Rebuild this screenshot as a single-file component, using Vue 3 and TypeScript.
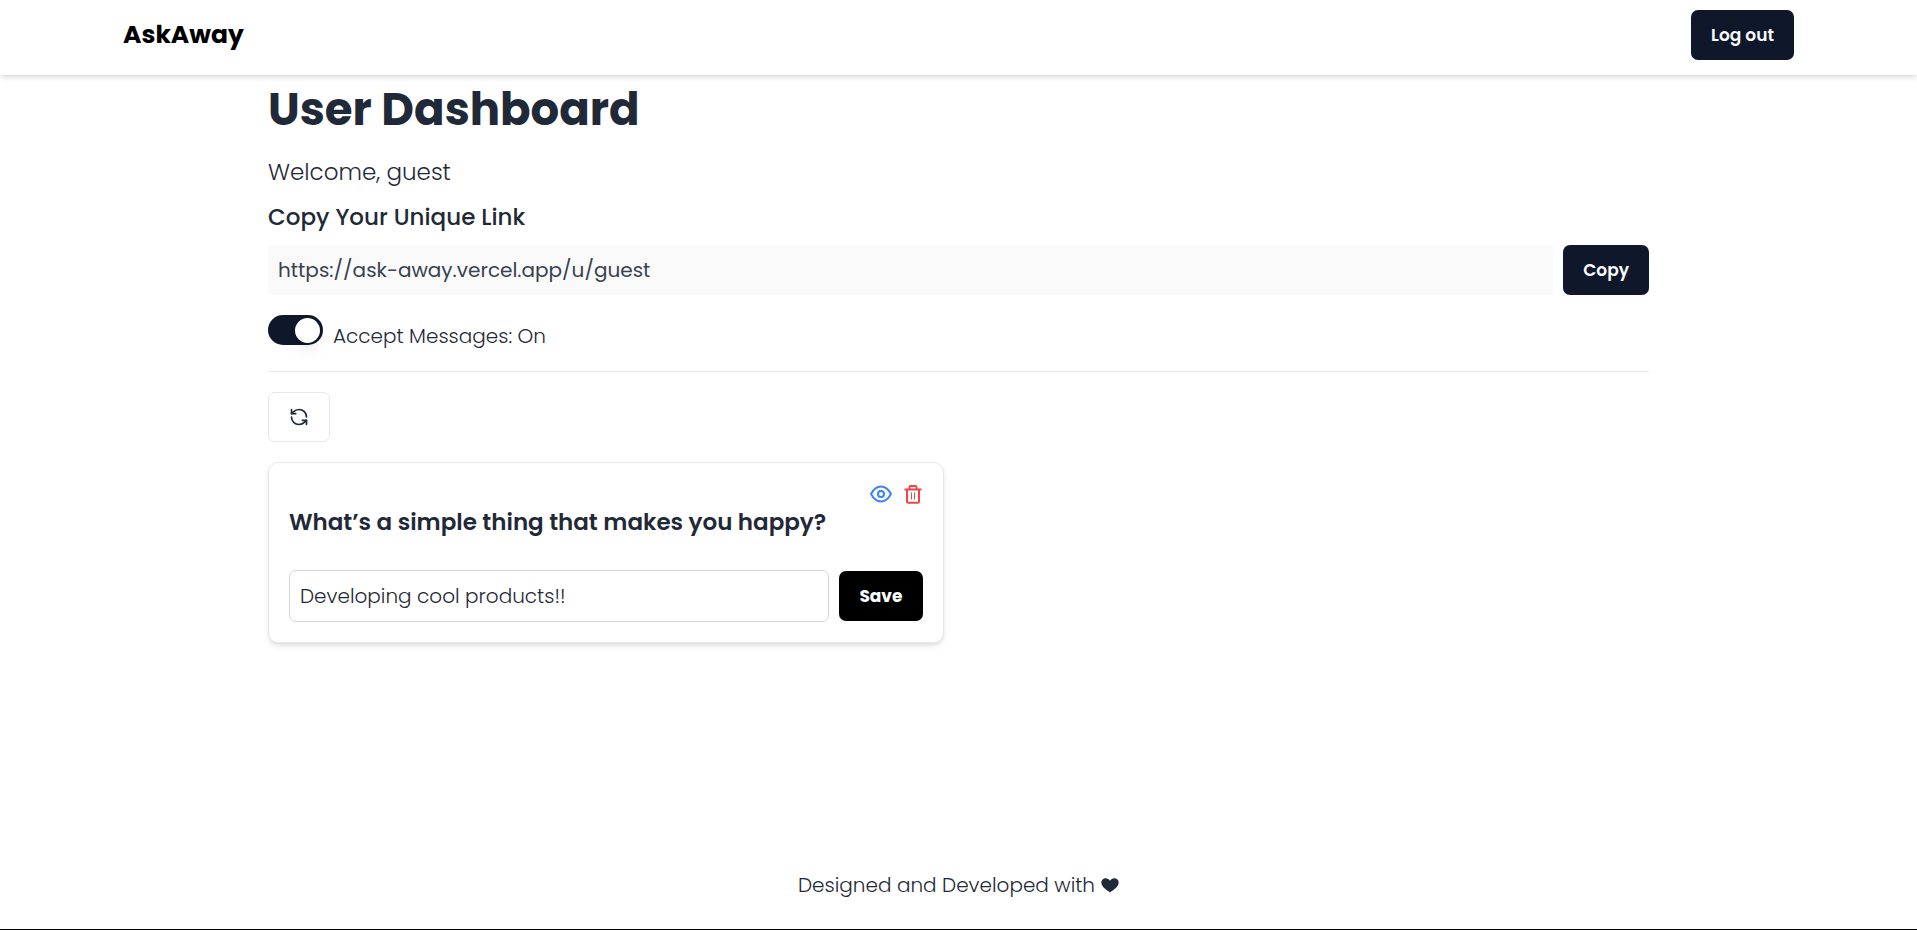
<script setup lang="ts">
import { ref } from 'vue'

interface Question {
  id: number
  title: string
  answer: string
}

const profileUrl = ref<string>('https://ask-away.vercel.app/u/guest')
const acceptMessages = ref<boolean>(true)
const questions = ref<Question[]>([
  { id: 1, title: 'What’s a simple thing that makes you happy?', answer: 'Developing cool products!!' },
])
</script>

<template>
  <div class="page">
    <header class="navbar">
      <nav class="nav-inner">
        <a class="brand" href="#">AskAway</a>
        <button class="btn" type="button">Log out</button>
      </nav>
    </header>

    <main class="dashboard">
      <h1>User Dashboard</h1>
      <p class="welcome">Welcome, guest</p>

      <h2><label for="profile-link">Copy Your Unique Link</label></h2>
      <div class="link-row">
        <input id="profile-link" v-model="profileUrl" class="link-input" type="text" readonly />
        <button class="btn" type="button">Copy</button>
      </div>

      <div class="switch-row">
        <input id="accept" v-model="acceptMessages" class="switch" type="checkbox" role="switch" />
        <label for="accept">Accept Messages: {{ acceptMessages ? 'On' : 'Off' }}</label>
      </div>

      <hr />

      <button class="refresh" type="button" aria-label="Refresh messages">
        <svg viewBox="0 0 24 24" width="20" height="20">
          <path d="M21 12a9 9 0 0 0-9-9 9.75 9.75 0 0 0-6.74 2.74L3 8" />
          <path d="M3 3v5h5" />
          <path d="M3 12a9 9 0 0 0 9 9 9.75 9.75 0 0 0 6.74-2.74L21 16" />
          <path d="M16 16h5v5" />
        </svg>
      </button>

      <section class="cards">
        <article v-for="q in questions" :key="q.id" class="card">
          <div class="actions">
            <button class="icon-btn view" type="button" aria-label="View question">
              <svg viewBox="0 0 24 24" width="24" height="24">
                <path d="M2 12C4.600 7.200 8 4.600 12 4.600S19.400 7.200 22 12C19.400 16.800 16 19.400 12 19.400S4.600 16.800 2 12Z" />
                <circle cx="12" cy="12" r="3" />
              </svg>
            </button>
            <button class="icon-btn delete" type="button" aria-label="Delete question">
              <svg viewBox="0 0 20 20" width="20" height="20">
                <path d="M1.500 5.500H18.500M6.500 5V3.200Q6.500 2 7.700 2H12.300Q13.500 2 13.500 3.200V5M4 5.500V17.300Q4 18.800 5.500 18.800H14.500Q16 18.800 16 17.300V5.500" />
                <path class="thin" d="M8.500 8.500V15.500M11.500 8.500V15.500" />
              </svg>
            </button>
          </div>
          <h3><label :for="`answer-${q.id}`">{{ q.title }}</label></h3>
          <form class="answer-row" @submit.prevent>
            <input :id="`answer-${q.id}`" v-model="q.answer" class="answer" type="text" />
            <button class="btn save" type="submit">Save</button>
          </form>
        </article>
      </section>
    </main>

    <footer class="footer">
      <span>Designed and Developed with</span>
      <svg viewBox="0 0 18 15" width="18" height="15" role="img" aria-label="love">
        <path d="M9 14.500C7.500 13.300 0.300 9.300 0.300 4.600C0.300 2 2.300 0.300 4.700 0.300C6.500 0.300 8 1.200 9 2.700C10 1.200 11.500 0.300 13.300 0.300C15.700 0.300 17.700 2 17.700 4.600C17.700 9.300 10.500 13.300 9 14.500Z" />
      </svg>
    </footer>
  </div>
</template>

<style>
body {
  margin: 0;
  background: #fff;
}
</style>

<style scoped>
* {
  box-sizing: border-box;
}

.page {
  display: flex;
  flex-direction: column;
  min-height: 100vh;
  border-bottom: 1px solid #000;
  color: #1f2937;
  font-family: Poppins, Inter, 'Open Sans', sans-serif;
  font-size: 20px;
  font-weight: 300;
  line-height: 30px;
}

h1,
h2,
h3,
p {
  margin: 0;
}

input,
button {
  font: inherit;
  color: inherit;
}

svg {
  display: block;
}

.navbar {
  padding: 10px 120px 15px;
  background: #fff;
  box-shadow: 0 4px 6px -1px rgb(0 0 0 / 0.1), 0 2px 4px -2px rgb(0 0 0 / 0.1);
}

.nav-inner {
  display: flex;
  align-items: center;
  justify-content: space-between;
  max-width: 1671px;
  margin: 0 auto;
}

.brand {
  color: #000;
  font-size: 25px;
  font-weight: 700;
  text-decoration: none;
}

.btn {
  flex: none;
  height: 50px;
  padding: 0 20px;
  border: 0;
  border-radius: 7px;
  background: #0f172a;
  color: #f8fafc;
  font-size: 17px;
  font-weight: 600;
  cursor: pointer;
}

.dashboard {
  width: 100%;
  max-width: 1441px;
  margin: 0 auto;
  padding: 10px 30px 30px;
}

h1 {
  margin-bottom: 20px;
  font-size: 45px;
  font-weight: 700;
  line-height: 50px;
}

.welcome {
  margin-bottom: 10px;
  font-size: 23px;
  line-height: 35px;
}

h2 {
  margin-bottom: 10px;
  font-size: 23px;
  font-weight: 500;
  line-height: 35px;
}

.link-row {
  display: flex;
  gap: 10px;
  margin-bottom: 20px;
}

.link-input {
  flex: 1;
  min-width: 0;
  padding: 10px;
  border: 0;
  outline: 0;
  background: #fafafa;
  color: #374151;
  font-weight: 400;
}

.switch-row {
  display: flex;
  gap: 10px;
  margin-bottom: 20px;
}

.switch-row label {
  padding-top: 6px;
}

.switch {
  display: flex;
  justify-content: flex-start;
  width: 55px;
  height: 30px;
  margin: 0;
  padding: 3px 3px 2px;
  border-radius: 15px;
  appearance: none;
  background: #e2e8f0;
  cursor: pointer;
}

.switch::before {
  content: '';
  width: 25px;
  height: 25px;
  border-radius: 50%;
  background: #fff;
  box-shadow: 0 10px 15px -3px rgb(0 0 0 / 0.1), 0 4px 6px -4px rgb(0 0 0 / 0.1);
}

.switch:checked {
  justify-content: flex-end;
  background: #0f172a;
}

hr {
  height: 1px;
  margin: 0 0 20px;
  border: 0;
  background: #e5e7eb;
}

.refresh {
  display: flex;
  align-items: center;
  height: 50px;
  padding: 0 20px;
  border: 1px solid #e5e7eb;
  border-radius: 7px;
  background: #fff;
  cursor: pointer;
}

.refresh svg {
  fill: none;
  stroke: currentColor;
  stroke-width: 2;
  stroke-linecap: round;
  stroke-linejoin: round;
}

.cards {
  display: grid;
  grid-template-columns: repeat(2, minmax(0, 1fr));
  gap: 30px;
  margin-top: 20px;
}

.card {
  padding: 20px;
  border: 1px solid #e5e7eb;
  border-radius: 10px;
  background: #fff;
  box-shadow: 0 4px 6px -1px rgb(0 0 0 / 0.1), 0 2px 4px -2px rgb(0 0 0 / 0.1);
}

.actions {
  display: flex;
  align-items: center;
  justify-content: flex-end;
  gap: 10px;
  height: 22px;
}

.icon-btn {
  padding: 0;
  border: 0;
  background: none;
  cursor: pointer;
}

.icon-btn svg {
  fill: none;
  stroke: currentColor;
  stroke-width: 2;
  stroke-linejoin: round;
}

.icon-btn .thin {
  stroke-width: 1;
}

.view {
  color: #3b82f6;
}

.delete {
  color: #ef4444;
}

h3 {
  margin-bottom: 30px;
  font-size: 23px;
  font-weight: 600;
  line-height: 35px;
}

.answer-row {
  display: flex;
  align-items: center;
  gap: 10px;
}

.answer {
  flex: 1;
  min-width: 0;
  padding: 10px;
  border: 1px solid #d4d4d8;
  border-radius: 7px;
  outline: 0;
  background: #fff;
}

.save {
  background: #000;
  color: #fff;
  font-weight: 700;
}

.footer {
  display: flex;
  align-items: center;
  justify-content: center;
  gap: 6px;
  margin-top: auto;
  padding: 29px;
}

.footer path {
  fill: currentColor;
}
</style>
